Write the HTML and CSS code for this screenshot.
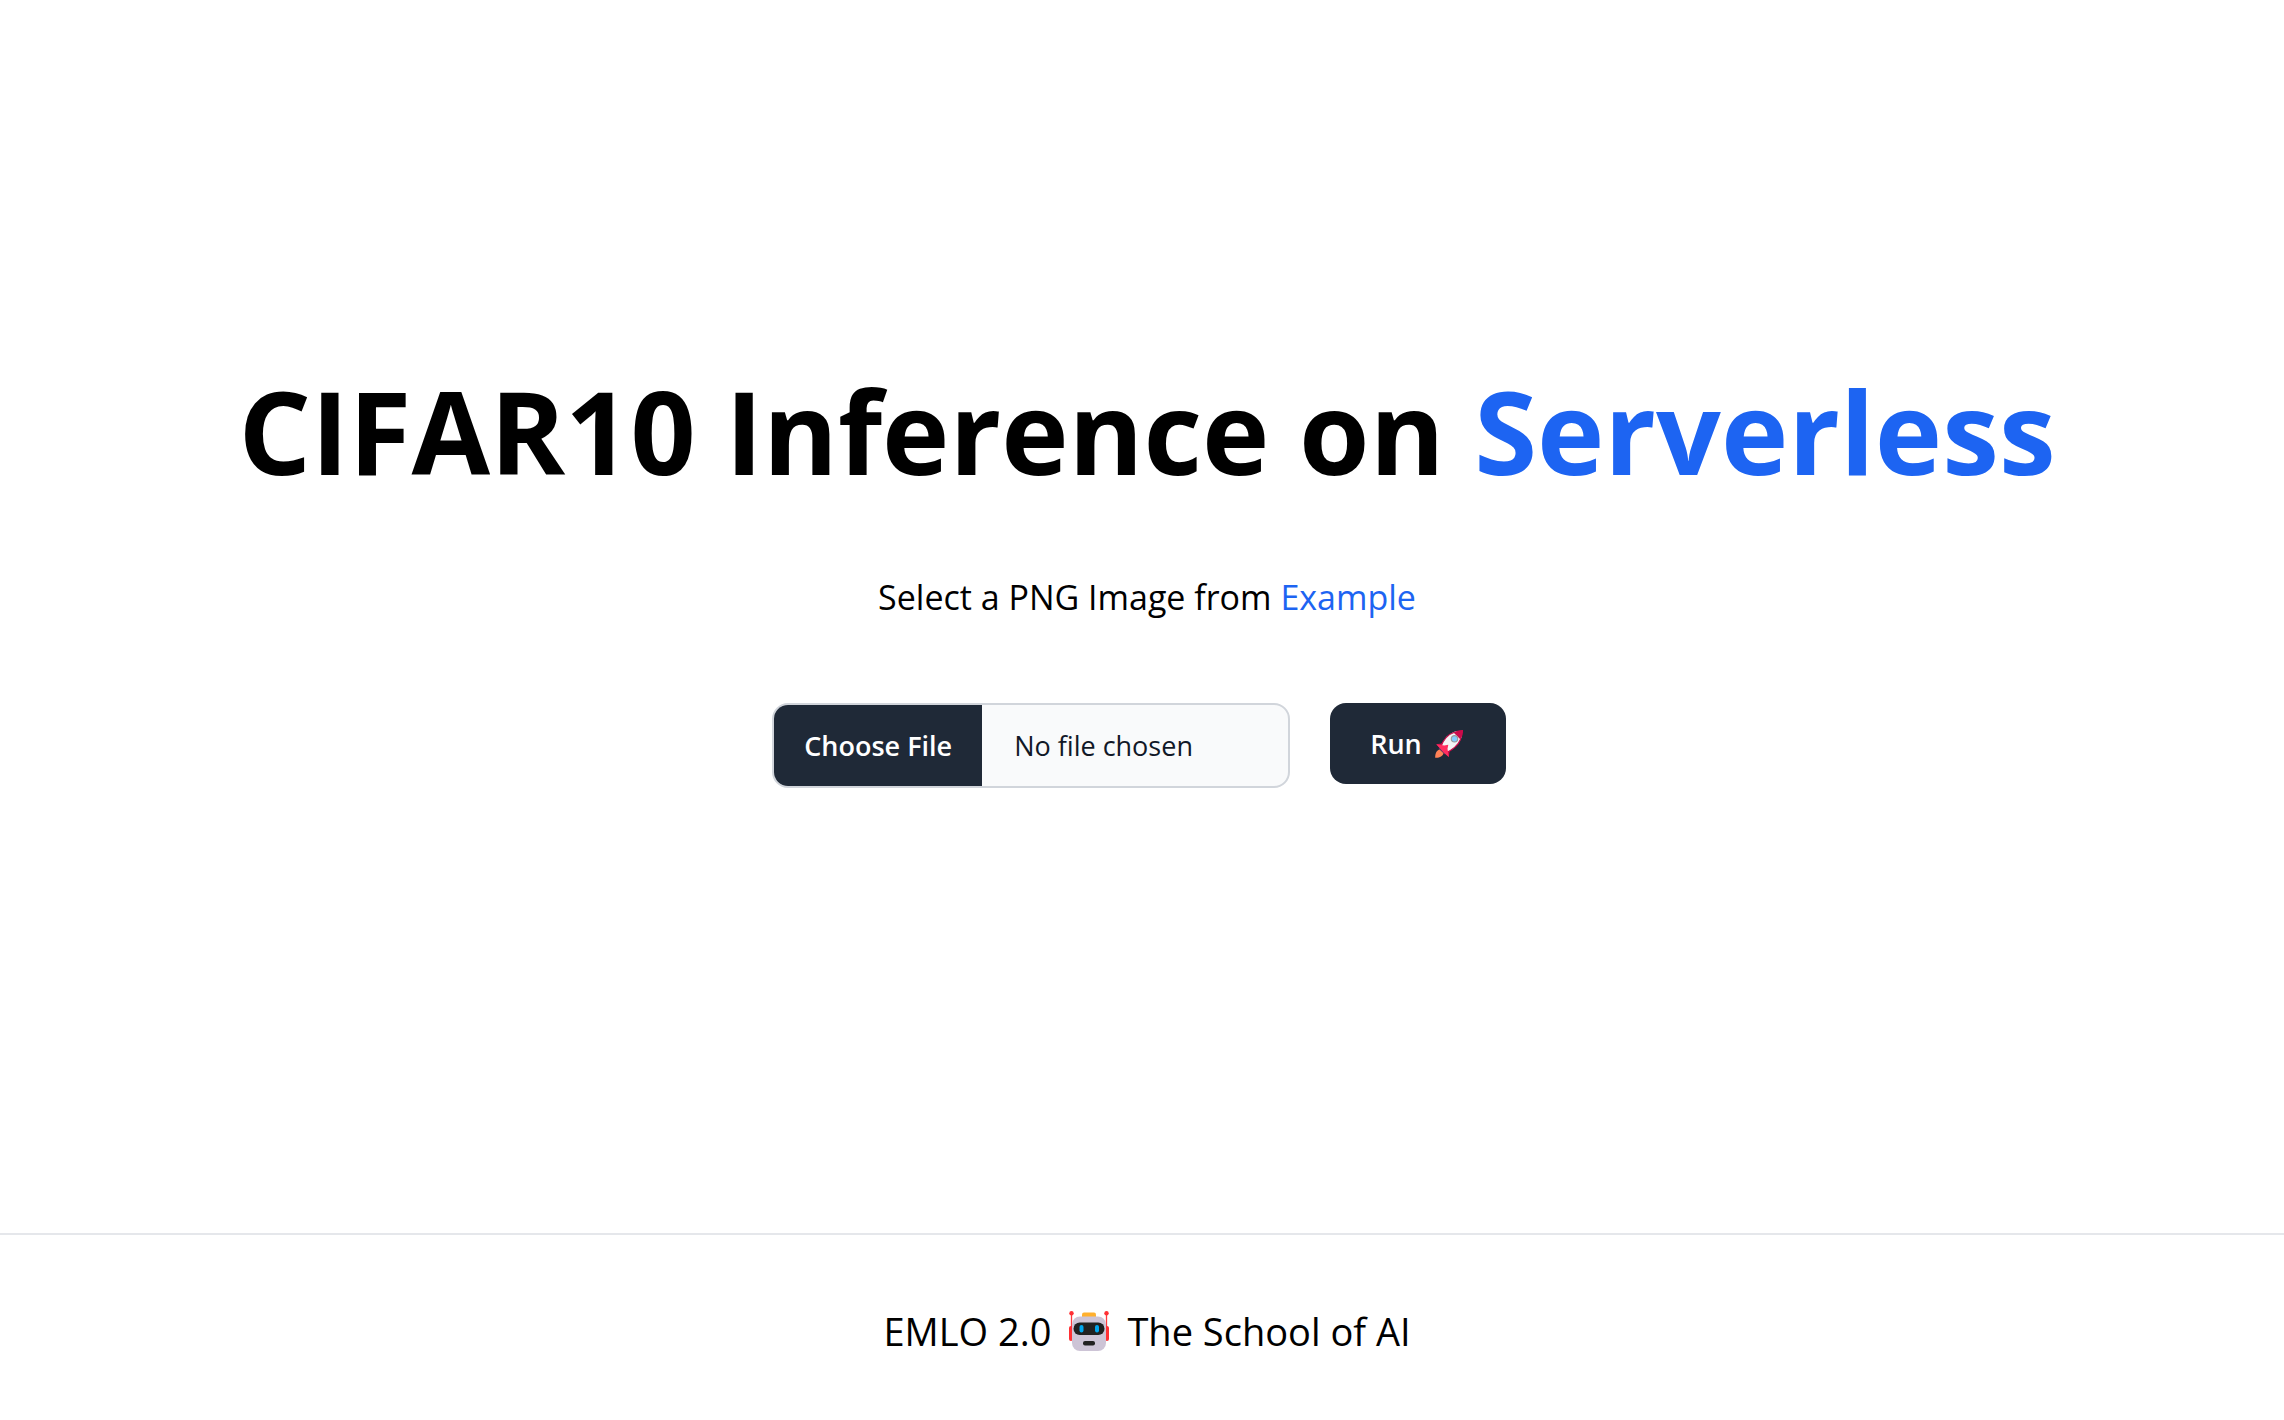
FILE: index.html
```html
<!DOCTYPE html>
<html lang="en">
<head>
<meta charset="utf-8">
<meta name="viewport" content="width=device-width, initial-scale=1">
<title>CIFAR10 Inference on Serverless</title>
<link rel="stylesheet" href="styles.css">
</head>
<body>
<main class="main">
  <h1 class="title">CIFAR10 Inference on <a class="link" href="#serverless">Serverless</a></h1>
  <p class="subtitle">Select a PNG Image from <a class="link" href="#example">Example</a></p>
  <form class="form">
    <input class="file" type="file" accept="image/png" aria-label="PNG image">
    <button class="run" type="button">Run
      <svg class="rocket" viewBox="0 0 30 30" aria-hidden="true">
        <path fill="#ff8257" d="M7 20C3 20.500 1 24 1.200 28.700c4 .3 7.600-1 8.600-5.200z"/>
        <path fill="#ca0b4a" d="M10.500 14 2.300 15.200l4.200 4.800z M16 19.500l-1.200 8.600-5-4.800z"/>
        <path fill="#533566" d="m6 18 6.500 6-1.700 1.600-6.300-6z"/>
        <path fill="#f4f4f4" d="M6.500 18.500C9.500 9 16 3.500 23 2l5 5c-2 7-7.500 13-16.500 17z"/>
        <path fill="#ca0b4a" d="M19.500 3.500C22.500 1.700 26 .6 29 1c.4 3-.7 6.500-2.500 9.500z"/>
        <path fill="none" stroke="#ca0b4a" stroke-width="1.200" d="M6.500 18.500C9.500 10 15 5 20.500 3.300M11.500 24c8-3.500 13-8.500 15.200-14"/>
        <path fill="#ff2e5f" d="m2.300 15.200 8 1.300 4-.8-.8 4 1.300 8.400-5.300-4.600z"/>
        <circle cx="20.500" cy="9.800" r="3.200" fill="#83cbff" stroke="#9b9b9b" stroke-width="1.200"/>
      </svg>
    </button>
  </form>
</main>
<footer class="footer">
  <span>EMLO 2.0</span>
  <svg class="robot" viewBox="0 0 40 40" aria-hidden="true">
    <path stroke="#ff3b3f" stroke-width="1.300" d="M2.500 2v18M37.500 2v18"/>
    <circle cx="2.500" cy="2.300" r="2.200" fill="#ff3034"/>
    <circle cx="37.500" cy="2.300" r="2.200" fill="#ff3034"/>
    <rect x="0" y="15" width="4" height="15" rx="2" fill="#ff3034"/>
    <rect x="36" y="15" width="4" height="15" rx="2" fill="#ff3034"/>
    <rect x="13" y="1.500" width="14" height="8" rx="2" fill="#ffb02e"/>
    <rect x="3" y="5.500" width="34" height="34.500" rx="8" fill="#cdc4d6"/>
    <rect x="4.500" y="11.500" width="31" height="12.500" rx="6.250" fill="#212121"/>
    <rect x="10.500" y="14" width="4" height="7.500" rx="2" fill="#00a6ed"/>
    <rect x="26" y="14" width="4" height="7.500" rx="2" fill="#00a6ed"/>
    <rect x="14" y="30" width="12" height="4.500" rx="2" fill="#212121"/>
  </svg>
  <span>The School of AI</span>
</footer>
</body>
</html>
```
FILE: styles.css
```css
* {
  box-sizing: border-box;
}

body {
  margin: 0;
  min-height: 100vh;
  display: flex;
  flex-direction: column;
  background: #fff;
  color: #000;
  font-family: "Open Sans", sans-serif;
  font-weight: 400;
}

.main {
  flex: 1;
  display: flex;
  flex-direction: column;
  align-items: center;
  justify-content: center;
  gap: 78px;
  padding: 0 0 74px 10px;
  text-align: center;
}

.title {
  margin: 0;
  font-size: 114px;
  line-height: 120px;
  font-weight: 700;
}

.link {
  color: #1d64f2;
  text-decoration: none;
}

.subtitle {
  margin: 0;
  font-size: 34px;
  line-height: 56px;
}

.form {
  display: flex;
  align-items: flex-start;
  gap: 40px;
  margin-right: 16px;
}

.file {
  width: 518px;
  border: 2px solid #d1d5db;
  border-radius: 16px;
  overflow: hidden;
  background: #f9fafb;
  color: #111827;
  font: 400 27px/41px "Open Sans", sans-serif;
  cursor: pointer;
}

.file::file-selector-button {
  margin: 0 32px 0 0;
  padding: 20px 30px;
  border: 0;
  background: #1f2937;
  color: #fff;
  font: 600 27px/41px "Open Sans", sans-serif;
}

.run {
  display: flex;
  align-items: center;
  gap: 12px;
  padding: 20px 42px 20px 40px;
  border: 0;
  border-radius: 16px;
  background: #1f2937;
  color: #fff;
  font: 600 27px/41px "Open Sans", sans-serif;
  cursor: pointer;
}

.rocket {
  width: 30px;
  height: 30px;
}

.footer {
  display: flex;
  justify-content: center;
  align-items: center;
  gap: 18px;
  padding: 66px 0 59px 10px;
  border-top: 2px solid #e5e7eb;
  font-size: 38px;
  line-height: 60px;
}

.robot {
  width: 40px;
  height: 40px;
}
```
